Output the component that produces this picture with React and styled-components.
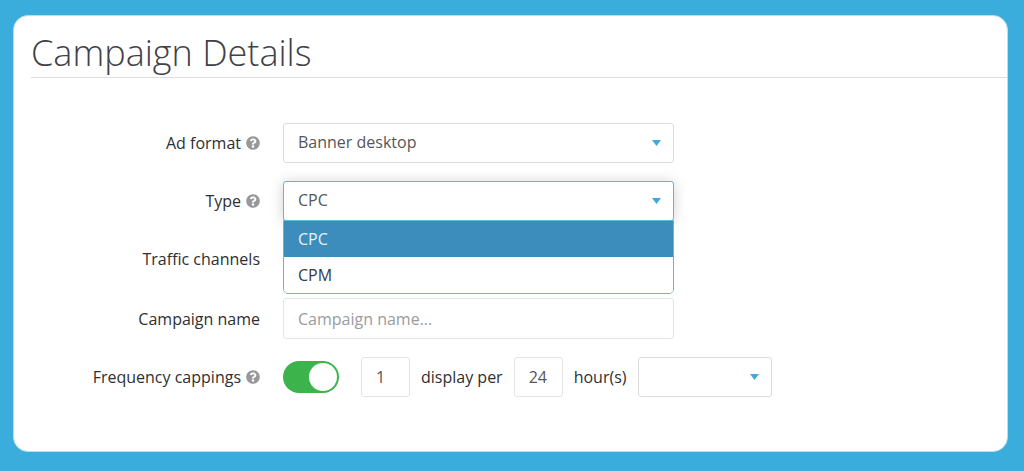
import React, { useState } from "react";
import styled, { createGlobalStyle } from "styled-components";
import { FaQuestionCircle } from "react-icons/fa";

const GlobalStyle = createGlobalStyle`
  *, *::before, *::after { box-sizing: border-box; }
  body {
    margin: 0;
    background: #3aaddc;
    color: #2e2f33;
    font: 16px/24px "Open Sans", "Noto Sans", sans-serif;
  }
`;

const Page = styled.div`
  display: flex;
  min-height: 100vh;
  padding: 15px 16px 19px 13px;
`;

const Card = styled.main`
  flex: 1;
  min-width: 0;
  padding: 13px 0 32px 17px;
  border: 1px solid #b5dff1;
  border-radius: 15px;
  background: #fff;
`;

const Title = styled.h1`
  margin: 0;
  border-bottom: 1px solid #dedede;
  color: #414146;
  font-size: 36px;
  font-weight: 300;
  line-height: 48px;
`;

const Form = styled.form`
  display: flex;
  flex-direction: column;
  gap: 18px;
  padding: 45px 18px 0 0;
`;

const Row = styled.div`
  display: grid;
  grid-template-columns: minmax(0, 229px) minmax(0, 1fr);
  column-gap: 23px;
  align-items: center;
  margin-bottom: ${(p) => (p.$spaced ? 1 : 0)}px;
`;

const LabelCell = styled.div`
  display: flex;
  align-items: center;
  justify-content: flex-end;
  gap: 5px;
  text-align: right;
`;

const HelpIcon = styled(FaQuestionCircle)`
  flex: none;
  width: 14px;
  height: 14px;
  color: #98979c;
`;

const Field = styled.div`
  position: relative;
  display: grid;
  width: 100%;
  max-width: ${(p) => p.$width || 391}px;
`;

const controlStyles = `
  width: 100%;
  height: 40px;
  margin: 0;
  padding: 0 14px;
  border: 1px solid #dcdcdc;
  border-radius: 3px;
  outline: none;
  background: #fff;
  color: #55565a;
  font: inherit;
`;

const Select = styled.select`
  ${controlStyles}
  grid-area: 1 / 1;
  appearance: none;
  padding-bottom: 2px;
  ${(p) =>
    p.$open &&
    `
    border-color: #5cb9dc;
    box-shadow: 0 1px 14px rgba(0, 0, 0, 0.18);
  `}
`;

const Input = styled.input`
  ${controlStyles}
  height: 41px;
  border-color: #e4e4e4;
  &::placeholder { color: #999b9e; opacity: 1; }
`;

const NumberInput = styled.input`
  ${controlStyles}
  flex: none;
  width: 49px;
  border-color: #e4e4e4;
`;

const CaretIcon = styled.svg`
  grid-area: 1 / 1;
  place-self: center end;
  width: 9px;
  height: 6px;
  margin-right: 13px;
  fill: #3fa9dc;
  pointer-events: none;
`;

const Menu = styled.ul`
  position: absolute;
  z-index: 2;
  top: 39px;
  left: 0;
  right: 0;
  margin: 0;
  padding: 0;
  overflow: hidden;
  border: 1px solid #5cb9dc;
  border-radius: 0 0 5px 5px;
  background: #fff;
  list-style: none;
`;

const Option = styled.li`
  padding: 6px 14px;
  background: ${(p) => (p["aria-selected"] ? "#3c8dbc" : "#fff")};
  color: ${(p) => (p["aria-selected"] ? "#e6f1f8" : "#3a3b3f")};
  cursor: pointer;
`;

const Capping = styled.div`
  display: flex;
  align-items: center;
  gap: 11px;
`;

const Toggle = styled.input`
  appearance: none;
  flex: none;
  display: flex;
  align-items: center;
  width: 56px;
  height: 32px;
  margin: 0 11px 0 0;
  padding: 2px;
  border-radius: 16px;
  background: #b9babd;
  cursor: pointer;
  &::before {
    content: "";
    width: 28px;
    height: 28px;
    border-radius: 50%;
    background: #fff;
  }
  &:checked {
    justify-content: flex-end;
    background: #3cb44b;
  }
`;

const Caret = () => (
  <CaretIcon viewBox="0 0 9 6" aria-hidden="true">
    <path d="M0 0h9L4.500 6z" />
  </CaretIcon>
);

function Label({ htmlFor, help, children }) {
  return (
    <LabelCell>
      <label htmlFor={htmlFor}>{children}</label>
      {help && <HelpIcon aria-hidden="true" />}
    </LabelCell>
  );
}

export default function App() {
  const [type, setType] = useState("CPC");
  const [open, setOpen] = useState(true);

  const pick = (value) => {
    setType(value);
    setOpen(false);
  };

  return (
    <>
      <GlobalStyle />
      <Page>
        <Card>
          <Title>Campaign Details</Title>
          <Form>
            <Row>
              <Label htmlFor="format" help>Ad format</Label>
              <Field>
                <Select id="format" defaultValue="desktop">
                  <option value="desktop">Banner desktop</option>
                </Select>
                <Caret />
              </Field>
            </Row>
            <Row>
              <Label htmlFor="type" help>Type</Label>
              <Field>
                <Select
                  id="type"
                  value={type}
                  $open={open}
                  onChange={(e) => setType(e.target.value)}
                  onMouseDown={(e) => {
                    e.preventDefault();
                    setOpen(!open);
                  }}
                >
                  <option>CPC</option>
                  <option>CPM</option>
                </Select>
                <Caret />
                {open && (
                  <Menu role="listbox" aria-label="Type">
                    {["CPC", "CPM"].map((value) => (
                      <Option
                        key={value}
                        role="option"
                        aria-selected={value === type}
                        onClick={() => pick(value)}
                      >
                        {value}
                      </Option>
                    ))}
                  </Menu>
                )}
              </Field>
            </Row>
            <Row $spaced>
              <Label htmlFor="channels">Traffic channels</Label>
              <Field>
                <Select id="channels" />
              </Field>
            </Row>
            <Row>
              <Label htmlFor="name">Campaign name</Label>
              <Field>
                <Input id="name" type="text" placeholder="Campaign name..." />
              </Field>
            </Row>
            <Row>
              <Label htmlFor="capping" help>Frequency cappings</Label>
              <Capping>
                <Toggle id="capping" type="checkbox" role="switch" defaultChecked />
                <NumberInput id="displays" type="text" inputMode="numeric" defaultValue="1" />
                <label htmlFor="displays">display per</label>
                <NumberInput id="hours" type="text" inputMode="numeric" defaultValue="24" />
                <label htmlFor="hours">hour(s)</label>
                <Field $width={134}>
                  <Select aria-label="Capping scope" />
                  <Caret />
                </Field>
              </Capping>
            </Row>
          </Form>
        </Card>
      </Page>
    </>
  );
}
